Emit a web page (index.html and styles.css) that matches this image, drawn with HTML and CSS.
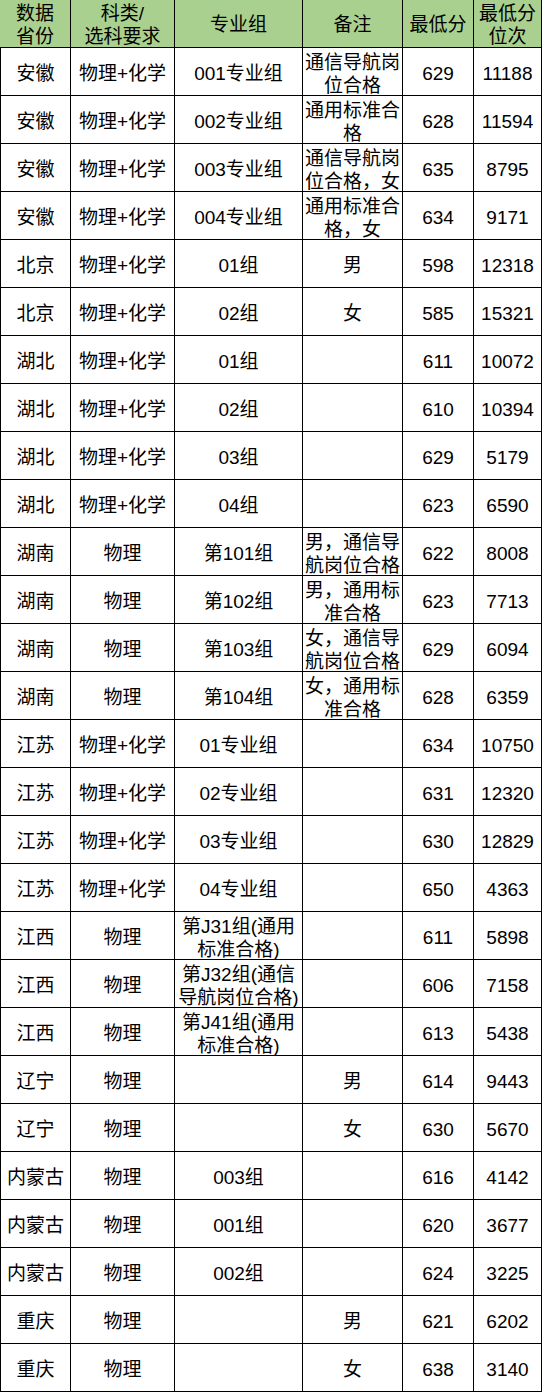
FILE: index.html
```html
<!DOCTYPE html>
<html lang="zh-CN">
<head>
<meta charset="utf-8">
<title>分数线</title>
<link rel="stylesheet" href="styles.css">
</head>
<body>
<div class="table">
  <div class="c h first">数据<br>省份</div><div class="c h">科类/<br>选科要求</div><div class="c h">专业组</div><div class="c h">备注</div><div class="c h">最低分</div><div class="c h">最低分<br>位次</div>

  <div class="c first">安徽</div><div class="c">物理+化学</div><div class="c">001专业组</div><div class="c">通信导航岗<br>位合格</div><div class="c">629</div><div class="c">11188</div>
  <div class="c first">安徽</div><div class="c">物理+化学</div><div class="c">002专业组</div><div class="c">通用标准合<br>格</div><div class="c">628</div><div class="c">11594</div>
  <div class="c first">安徽</div><div class="c">物理+化学</div><div class="c">003专业组</div><div class="c">通信导航岗<br>位合格，女</div><div class="c">635</div><div class="c">8795</div>
  <div class="c first">安徽</div><div class="c">物理+化学</div><div class="c">004专业组</div><div class="c">通用标准合<br>格，女</div><div class="c">634</div><div class="c">9171</div>
  <div class="c first">北京</div><div class="c">物理+化学</div><div class="c">01组</div><div class="c">男</div><div class="c">598</div><div class="c">12318</div>
  <div class="c first">北京</div><div class="c">物理+化学</div><div class="c">02组</div><div class="c">女</div><div class="c">585</div><div class="c">15321</div>
  <div class="c first">湖北</div><div class="c">物理+化学</div><div class="c">01组</div><div class="c"></div><div class="c">611</div><div class="c">10072</div>
  <div class="c first">湖北</div><div class="c">物理+化学</div><div class="c">02组</div><div class="c"></div><div class="c">610</div><div class="c">10394</div>
  <div class="c first">湖北</div><div class="c">物理+化学</div><div class="c">03组</div><div class="c"></div><div class="c">629</div><div class="c">5179</div>
  <div class="c first">湖北</div><div class="c">物理+化学</div><div class="c">04组</div><div class="c"></div><div class="c">623</div><div class="c">6590</div>
  <div class="c first">湖南</div><div class="c">物理</div><div class="c">第101组</div><div class="c">男，通信导<br>航岗位合格</div><div class="c">622</div><div class="c">8008</div>
  <div class="c first">湖南</div><div class="c">物理</div><div class="c">第102组</div><div class="c">男，通用标<br>准合格</div><div class="c">623</div><div class="c">7713</div>
  <div class="c first">湖南</div><div class="c">物理</div><div class="c">第103组</div><div class="c">女，通信导<br>航岗位合格</div><div class="c">629</div><div class="c">6094</div>
  <div class="c first">湖南</div><div class="c">物理</div><div class="c">第104组</div><div class="c">女，通用标<br>准合格</div><div class="c">628</div><div class="c">6359</div>
  <div class="c first">江苏</div><div class="c">物理+化学</div><div class="c">01专业组</div><div class="c"></div><div class="c">634</div><div class="c">10750</div>
  <div class="c first">江苏</div><div class="c">物理+化学</div><div class="c">02专业组</div><div class="c"></div><div class="c">631</div><div class="c">12320</div>
  <div class="c first">江苏</div><div class="c">物理+化学</div><div class="c">03专业组</div><div class="c"></div><div class="c">630</div><div class="c">12829</div>
  <div class="c first">江苏</div><div class="c">物理+化学</div><div class="c">04专业组</div><div class="c"></div><div class="c">650</div><div class="c">4363</div>
  <div class="c first">江西</div><div class="c">物理</div><div class="c">第J31组(通用<br>标准合格)</div><div class="c"></div><div class="c">611</div><div class="c">5898</div>
  <div class="c first">江西</div><div class="c">物理</div><div class="c">第J32组(通信<br>导航岗位合格)</div><div class="c"></div><div class="c">606</div><div class="c">7158</div>
  <div class="c first">江西</div><div class="c">物理</div><div class="c">第J41组(通用<br>标准合格)</div><div class="c"></div><div class="c">613</div><div class="c">5438</div>
  <div class="c first">辽宁</div><div class="c">物理</div><div class="c"></div><div class="c">男</div><div class="c">614</div><div class="c">9443</div>
  <div class="c first">辽宁</div><div class="c">物理</div><div class="c"></div><div class="c">女</div><div class="c">630</div><div class="c">5670</div>
  <div class="c first">内蒙古</div><div class="c">物理</div><div class="c">003组</div><div class="c"></div><div class="c">616</div><div class="c">4142</div>
  <div class="c first">内蒙古</div><div class="c">物理</div><div class="c">001组</div><div class="c"></div><div class="c">620</div><div class="c">3677</div>
  <div class="c first">内蒙古</div><div class="c">物理</div><div class="c">002组</div><div class="c"></div><div class="c">624</div><div class="c">3225</div>
  <div class="c first">重庆</div><div class="c">物理</div><div class="c"></div><div class="c">男</div><div class="c">621</div><div class="c">6202</div>
  <div class="c first">重庆</div><div class="c">物理</div><div class="c"></div><div class="c">女</div><div class="c">638</div><div class="c">3140</div>
</div>
</body>
</html>
```

FILE: styles.css
```css
html, body {
  margin: 0;
  padding: 0;
  background: #ffffff;
}

.table {
  display: grid;
  grid-template-columns: 71px 104px 128px 100px 71px 68px;
  grid-auto-rows: 48px;
  width: 542px;
  font-family: "Liberation Sans", "Noto Sans CJK SC", sans-serif;
  font-size: 19px;
  line-height: 23px;
  color: #000000;
}

.c {
  box-sizing: border-box;
  display: flex;
  align-items: center;
  justify-content: center;
  text-align: center;
  padding-top: 4px;
  border-right: 1px solid #000000;
  border-bottom: 1px solid #000000;
  white-space: nowrap;
  overflow: hidden;
}

.c.first {
  border-left: 1px solid #000000;
}

.c.h {
  background: #a9d08e;
  padding-top: 2px;
}

.c.h.first {
  border-left: none;
}
```
